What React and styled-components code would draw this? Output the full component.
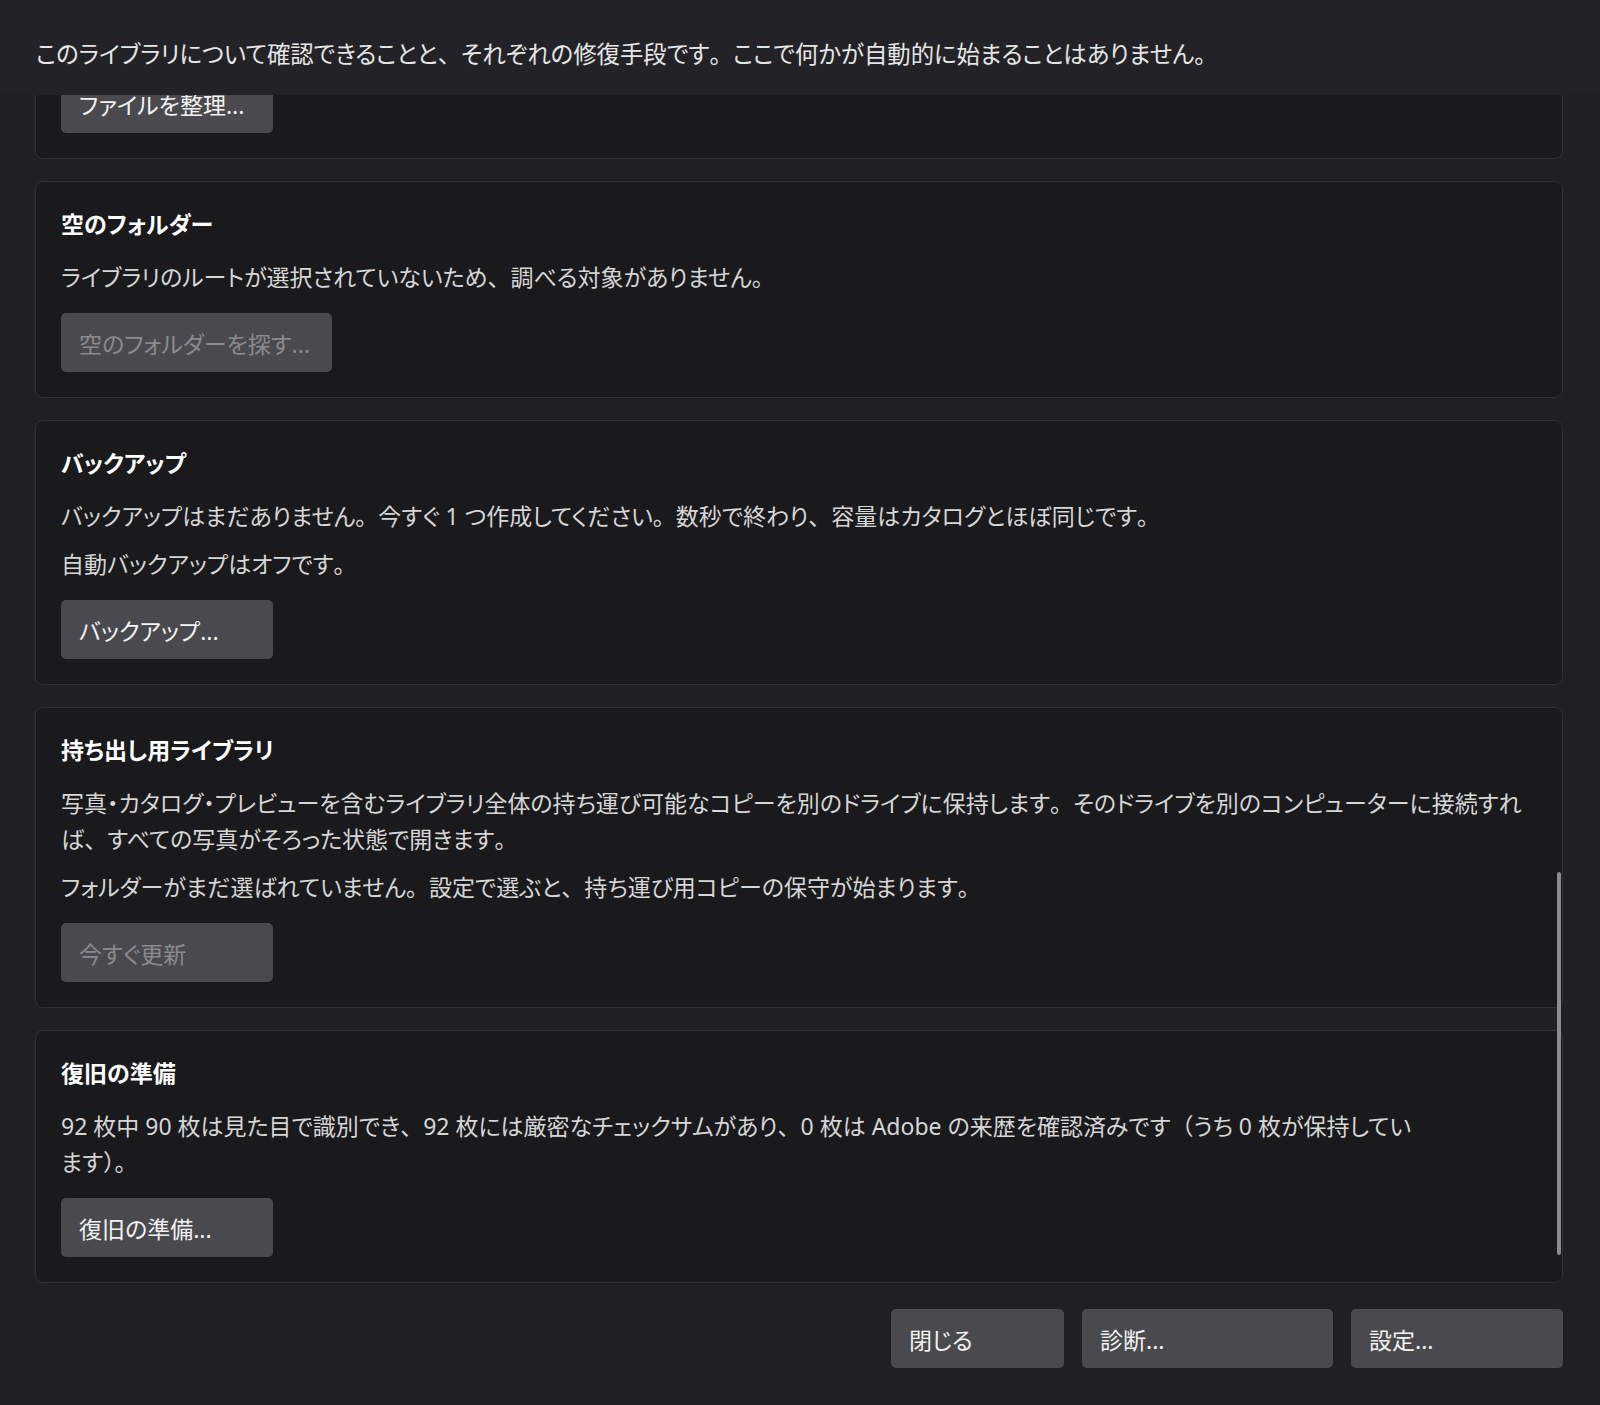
import React, { useLayoutEffect, useRef } from "react"
import styled, { createGlobalStyle } from "styled-components"

const GlobalStyle = createGlobalStyle`
  html, body {
    margin: 0;
    padding: 0;
    background: #202024;
  }
  body {
    font-family: "Noto Sans", "Noto Sans CJK JP", sans-serif;
    font-feature-settings: "palt" 1;
  }
`

const Wrap = styled.div`
  height: 100vh;
  display: flex;
  flex-direction: column;
  background: #202024;
  color: #d8d8d8;
  font-size: 23px;
`

const Intro = styled.div`
  flex: none;
  height: 95px;
  box-sizing: border-box;
  padding: 36px 36px 0;
  background: #232327;
  color: #e6e6e6;
  font-size: 23.4px;
  line-height: 36px;
  white-space: nowrap;
`

const ScrollWrap = styled.div`
  flex: 1;
  min-height: 0;
  position: relative;
  margin: 0 37px 0 35px;
`

const Scroller = styled.div`
  height: 100%;
  overflow-y: auto;
  scrollbar-width: none;
  &::-webkit-scrollbar {
    display: none;
  }
`

const List = styled.div`
  display: flex;
  flex-direction: column;
  gap: 22px;
`

const Thumb = styled.div`
  position: absolute;
  right: 2px;
  bottom: 28px;
  width: 4px;
  height: 383px;
  border-radius: 2px;
  background: #8c8c8f;
`

const Card = styled.section`
  display: flex;
  flex-direction: column;
  align-items: flex-start;
  gap: 12px;
  padding: 24px 25px 25px;
  border: 1px solid #313136;
  border-radius: 8px;
  background: #1a1a1d;
`

const Title = styled.h3`
  margin: 0 0 5px;
  font-size: 23px;
  font-weight: 700;
  line-height: 36px;
  color: #ffffff;
`

const Text = styled.p`
  margin: 0;
  line-height: 36px;
  color: #d6d6d6;
  white-space: pre-line;
`

// full-width punctuation, as the original font draws it
const Punct = styled.span`
  font-feature-settings: normal;
`

const Button = styled.button`
  box-sizing: border-box;
  height: 59px;
  padding: 0 18px;
  border: none;
  border-radius: 5px;
  background: #4a4a4e;
  color: ${(p) => (p.disabled ? "#8b8b8e" : "#f2f2f2")};
  font-family: inherit;
  font-feature-settings: "palt" 1;
  font-size: 23px;
  text-align: left;
  white-space: nowrap;
  cursor: default;
`

const CardButton = styled(Button)`
  min-width: 212px;
  margin-top: 6px;
  padding-right: 22px;
`

const DialogButton = styled(Button)`
  width: ${(p) => p.$width}px;
`

const Footer = styled.div`
  flex: none;
  display: flex;
  justify-content: flex-end;
  gap: 18px;
  padding: 26px 37px 37px 0;
`

const jp = (str) =>
  str.split(/([、。（）])/).map((part, i) =>
    /^[、。（）]$/.test(part) ? <Punct key={i}>{part}</Punct> : part
  )

const sections = [
  {
    title: "ファイルの整理",
    lines: ["ライブラリ内のファイルを日付ごとのフォルダーに並べ替えます。"],
    action: "ファイルを整理...",
  },
  {
    title: "空のフォルダー",
    lines: ["ライブラリのルートが選択されていないため、調べる対象がありません。"],
    action: "空のフォルダーを探す...",
    disabled: true,
  },
  {
    title: "バックアップ",
    lines: [
      "バックアップはまだありません。今すぐ 1 つ作成してください。数秒で終わり、容量はカタログとほぼ同じです。",
      "自動バックアップはオフです。",
    ],
    action: "バックアップ...",
  },
  {
    title: "持ち出し用ライブラリ",
    lines: [
      "写真・カタログ・プレビューを含むライブラリ全体の持ち運び可能なコピーを別のドライブに保持します。そのドライブを別のコンピューターに接続すれ\nば、すべての写真がそろった状態で開きます。",
      "フォルダーがまだ選ばれていません。設定で選ぶと、持ち運び用コピーの保守が始まります。",
    ],
    action: "今すぐ更新",
    disabled: true,
  },
  {
    title: "復旧の準備",
    lines: [
      "92 枚中 90 枚は見た目で識別でき、92 枚には厳密なチェックサムがあり、0 枚は Adobe の来歴を確認済みです（うち 0 枚が保持してい\nます）。",
    ],
    action: "復旧の準備...",
  },
]

const App = () => {
  const scrollRef = useRef(null)

  useLayoutEffect(() => {
    const el = scrollRef.current
    if (el) el.scrollTop = el.scrollHeight
  }, [])

  return (
    <Wrap>
      <GlobalStyle />
      <Intro>
        {jp("このライブラリについて確認できることと、それぞれの修復手段です。ここで何かが自動的に始まることはありません。")}
      </Intro>
      <ScrollWrap>
        <Scroller ref={scrollRef}>
          <List>
            {sections.map((s) => (
              <Card key={s.title}>
                <Title>{s.title}</Title>
                {s.lines.map((line, i) => (
                  <Text key={i}>{jp(line)}</Text>
                ))}
                <CardButton disabled={s.disabled}>{s.action}</CardButton>
              </Card>
            ))}
          </List>
        </Scroller>
        <Thumb />
      </ScrollWrap>
      <Footer>
        <DialogButton $width={173}>閉じる</DialogButton>
        <DialogButton $width={251}>診断...</DialogButton>
        <DialogButton $width={212}>設定...</DialogButton>
      </Footer>
    </Wrap>
  )
}

export default App
